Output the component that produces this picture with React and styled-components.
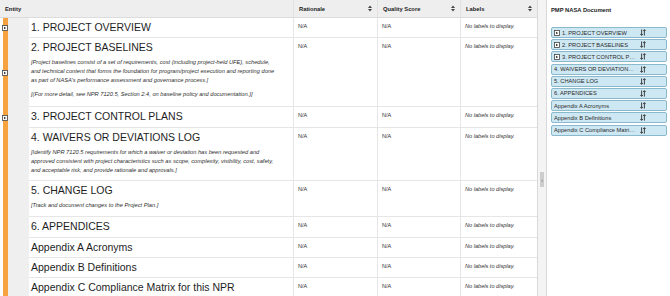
import React from "react";
import styled, { createGlobalStyle } from "styled-components";

const GlobalStyle = createGlobalStyle`
  html, body { margin: 0; padding: 0; background: #fff; }
  body { font-family: "Liberation Sans", Arial, sans-serif; color: #222; }
`;

const COLS = "293px 84px 83px 77px";

const Page = styled.div`
  display: flex;
  width: 670px;
  height: 296px;
  overflow: hidden;
`;

const Main = styled.div`
  width: 537px;
  flex: none;
  display: flex;
  flex-direction: column;
  overflow: hidden;
`;

const HeaderRow = styled.div`
  display: grid;
  grid-template-columns: ${COLS};
  height: 18px;
  flex: none;
  box-sizing: border-box;
  background: #eeeeee;
  border-bottom: 1px solid #dcdcdc;
`;

const HeaderCell = styled.div`
  display: flex;
  align-items: center;
  justify-content: space-between;
  padding: 0 5px 0 5px;
  font-size: 5.8px;
  font-weight: bold;
  color: #222;
  border-left: ${(p) => (p.$first ? "none" : "1px solid #e2e2e2")};
`;

const Row = styled.div`
  display: grid;
  grid-template-columns: ${COLS};
  height: ${(p) => p.$h}px;
  flex: none;
`;

const EntityCell = styled.div`
  display: flex;
`;

const Gutter = styled.div`
  width: 29px;
  flex: none;
  display: flex;
  align-items: center;
  padding-left: 2px;
  box-sizing: border-box;
  background: linear-gradient(to right, #fff 0 3px, #f7a241 3px 8px, #efefef 8px);
`;

const Content = styled.div`
  flex: 1;
  padding: 3px 0 0 2px;
  border-bottom: 1px solid #e6e6e6;
  overflow: hidden;
`;

const Heading = styled.div`
  font-size: 10.5px;
  line-height: 13px;
  white-space: nowrap;
  color: #1e1e1e;
`;

const Para = styled.div`
  margin-top: ${(p) => p.$gap}px;
  font-size: 5.7px;
  line-height: 9px;
  font-style: italic;
  color: #2e2e2e;
`;

const Line = styled.span`
  display: block;
  white-space: nowrap;
`;

const Cell = styled.div`
  padding: 4px 0 0 4px;
  font-size: 5.6px;
  line-height: 8px;
  color: #333;
  font-style: ${(p) => (p.$italic ? "italic" : "normal")};
  border-left: 1px solid #e6e6e6;
  border-bottom: 1px solid #e6e6e6;
`;

const Splitter = styled.div`
  width: 10px;
  flex: none;
  box-sizing: border-box;
  display: flex;
  flex-direction: column;
  align-items: center;
  padding-top: 172px;
  background: #f4f4f4;
  border-left: 1px solid #d8d8d8;
  border-right: 1px solid #d8d8d8;
`;

const Handle = styled.div`
  width: 4px;
  height: 15px;
  background: #cdcdcd;
  color: #666;
  font-size: 5px;
  display: flex;
  align-items: center;
  justify-content: center;
`;

const Sidebar = styled.div`
  width: 123px;
  min-width: 0;
  flex: none;
  box-sizing: border-box;
  padding: 6px 3px 0 4px;
  overflow: hidden;
`;

const Title = styled.div`
  font-size: 5.8px;
  font-weight: bold;
  line-height: 8px;
  margin-bottom: 13px;
  color: #222;
  white-space: nowrap;
`;

const NavList = styled.div`
  display: flex;
  flex-direction: column;
  gap: 1.2px;
`;

const NavItem = styled.div`
  height: 11px;
  min-width: 0;
  box-sizing: border-box;
  display: flex;
  align-items: center;
  gap: 2px;
  padding: 0 20px 0 2px;
  background: #cde7f3;
  border: 1px solid #8ab8cc;
  border-radius: 2px;
  font-size: 5.7px;
  color: #2a2a2a;
  overflow: hidden;
`;

const NavLabel = styled.span`
  flex: 1;
  min-width: 0;
  overflow: hidden;
  text-overflow: ellipsis;
  white-space: nowrap;
  margin-right: 2px;
`;

function SortIcon() {
  return (
    <svg width="4" height="7" viewBox="0 0 4 7">
      <polygon points="0,3 2,0.6 4,3" fill="#444" />
      <polygon points="0,4 2,6.4 4,4" fill="#444" />
    </svg>
  );
}

function ExpandIcon() {
  return (
    <svg width="6" height="6" viewBox="0 0 6 6" style={{ flex: "none" }}>
      <rect x="0.5" y="0.5" width="5" height="5" fill="#fff" stroke="#444" strokeWidth="0.8" />
      <polygon points="2,1.7 4.2,3 2,4.3" fill="#333" />
    </svg>
  );
}

function ReorderIcon() {
  return (
    <svg width="6" height="7" viewBox="0 0 6 7" style={{ flex: "none" }}>
      <path d="M1.6 0.4 V6.2 M0.3 4.9 L1.6 6.4 L2.9 4.9" stroke="#333" strokeWidth="0.9" fill="none" />
      <path d="M4.4 6.6 V0.8 M3.1 2.1 L4.4 0.6 L5.7 2.1" stroke="#333" strokeWidth="0.9" fill="none" />
    </svg>
  );
}

const rows = [
  { title: "1. PROJECT OVERVIEW", h: 20, expand: true },
  {
    title: "2. PROJECT BASELINES",
    h: 69,
    expand: true,
    paras: [
      [
        "[Project baselines consist of a set of requirements, cost (including project-held UFE), schedule,",
        "and technical content that forms the foundation for program/project execution and reporting done",
        "as part of NASA's performance assessment and governance process.]",
      ],
      ["[(For more detail, see NPR 7120.5, Section 2.4, on baseline policy and documentation.)]"],
    ],
  },
  { title: "3. PROJECT CONTROL PLANS", h: 21, expand: true },
  {
    title: "4. WAIVERS OR DEVIATIONS LOG",
    h: 53,
    paras: [
      [
        "[Identify NPR 7120.5 requirements for which a waiver or deviation has been requested and",
        "approved consistent with project characteristics such as scope, complexity, visibility, cost, safety,",
        "and acceptable risk, and provide rationale and approvals.]",
      ],
    ],
  },
  {
    title: "5. CHANGE LOG",
    h: 36,
    paras: [["[Track and document changes to the Project Plan.]"]],
  },
  { title: "6. APPENDICES", h: 21 },
  { title: "Appendix A Acronyms", h: 20 },
  { title: "Appendix B Definitions", h: 20 },
  { title: "Appendix C Compliance Matrix for this NPR", h: 20 },
];

const navItems = [
  { label: "1. PROJECT OVERVIEW", expand: true },
  { label: "2. PROJECT BASELINES", expand: true },
  { label: "3. PROJECT CONTROL PLANS", expand: true },
  { label: "4. WAIVERS OR DEVIATIONS LOG" },
  { label: "5. CHANGE LOG" },
  { label: "6. APPENDICES" },
  { label: "Appendix A Acronyms" },
  { label: "Appendix B Definitions" },
  { label: "Appendix C Compliance Matrix for this NPR" },
];

export default function App() {
  return (
    <>
      <GlobalStyle />
      <Page>
        <Main>
          <HeaderRow>
            <HeaderCell $first>Entity</HeaderCell>
            <HeaderCell>
              Rationale <SortIcon />
            </HeaderCell>
            <HeaderCell>
              Quality Score <SortIcon />
            </HeaderCell>
            <HeaderCell>
              Labels <SortIcon />
            </HeaderCell>
          </HeaderRow>
          {rows.map((r) => (
            <Row key={r.title} $h={r.h}>
              <EntityCell>
                <Gutter>{r.expand && <ExpandIcon />}</Gutter>
                <Content>
                  <Heading>{r.title}</Heading>
                  {r.paras &&
                    r.paras.map((p, i) => (
                      <Para key={i} $gap={i === 0 ? 3.5 : 5}>
                        {p.map((l) => (
                          <Line key={l}>{l}</Line>
                        ))}
                      </Para>
                    ))}
                </Content>
              </EntityCell>
              <Cell>N/A</Cell>
              <Cell>N/A</Cell>
              <Cell $italic>No labels to display.</Cell>
            </Row>
          ))}
        </Main>
        <Splitter>
          <Handle>›</Handle>
        </Splitter>
        <Sidebar>
          <Title>PMP NASA Document</Title>
          <NavList>
            {navItems.map((n) => (
              <NavItem key={n.label}>
                {n.expand && <ExpandIcon />}
                <NavLabel>{n.label}</NavLabel>
                <ReorderIcon />
              </NavItem>
            ))}
          </NavList>
        </Sidebar>
      </Page>
    </>
  );
}
